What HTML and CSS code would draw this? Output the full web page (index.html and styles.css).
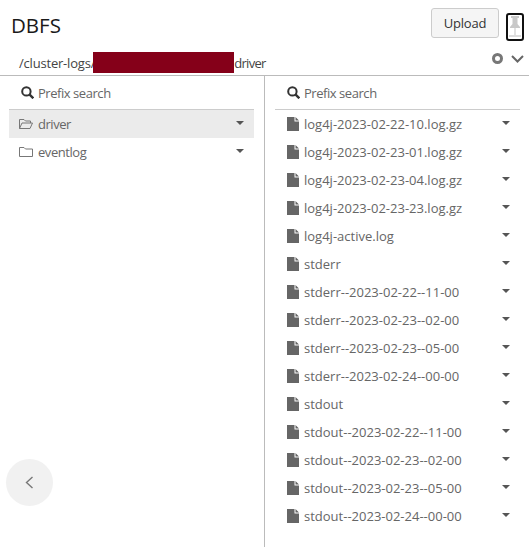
FILE: index.html
```html
<!DOCTYPE html>
<html lang="en">
<head>
    <meta charset="UTF-8">
    <title>DBFS</title>
    <link rel="stylesheet" href="styles.css">
</head>
<body>
    <svg class="sprites" width="0" height="0">
        <symbol id="i-file" viewBox="0 0 12 14"><path d="M0 0H7.500V4.500H12V14H0Z M8.500 0L12 3.500H8.500Z" fill="#666"/></symbol>
        <symbol id="i-caret" viewBox="0 0 8 4"><path d="M0 0H8L4 4Z" fill="#555"/></symbol>
        <symbol id="i-search" viewBox="0 0 13 13"><circle cx="5.400" cy="5.400" r="4.200" fill="none" stroke="#333" stroke-width="2"/><path d="M8.400 8.400L12.300 12.300" stroke="#333" stroke-width="2.400"/></symbol>
    </svg>

    <header class="top">
        <h1 class="title">DBFS</h1>
        <div class="actions">
            <button class="upload">Upload</button>
            <button class="pin">
                <svg width="12" height="24" viewBox="0 0 12 24"><path d="M2 1H10V3H8.500V9L11 12V13H1V12L3.500 9V3H2Z" fill="#c8c8c8"/><path d="M5.300 13H6.700V20H5.300Z" fill="#d4d4d4"/><path d="M0 20H12V22H0Z" fill="#dcdcdc"/></svg>
            </button>
        </div>
    </header>

    <div class="path">
        <div class="crumbs"><span class="crumb-root">/cluster-logs/</span><span class="redact"></span><span class="crumb-leaf">driver</span></div>
        <div class="path-tools">
            <span class="stop"></span>
            <svg width="13" height="8" viewBox="0 0 13 8"><path d="M1 1L6.500 6.500L12 1" fill="none" stroke="#666" stroke-width="2"/></svg>
        </div>
    </div>

    <main class="panes">
        <section class="pane pane-left">
            <div class="search"><svg width="13" height="13"><use href="#i-search"/></svg><span>Prefix search</span></div>
            <ul class="list">
                <li class="row active">
                    <svg class="ico" width="14" height="12" viewBox="0 0 14 12"><path d="M.5 10.500V1.500H5L6.500 3H11.500V5M.5 10.500L3 5H13.500L11 10.500Z" fill="none" stroke="#777"/></svg>
                    <span class="name">driver</span>
                    <svg class="caret" width="8" height="4"><use href="#i-caret"/></svg>
                </li>
                <li class="row">
                    <svg class="ico" width="14" height="12" viewBox="0 0 14 12"><path d="M.5 10.500V1.500H5L6.500 3H13.500V10.500Z" fill="none" stroke="#777"/></svg>
                    <span class="name">eventlog</span>
                    <svg class="caret" width="8" height="4"><use href="#i-caret"/></svg>
                </li>
            </ul>
            <button class="collapse">
                <svg width="9" height="13" viewBox="0 0 9 13"><path d="M7.500 1L1.500 6.500L7.500 12" fill="none" stroke="#777" stroke-width="1.400"/></svg>
            </button>
        </section>
        <section class="pane pane-right">
            <div class="search"><svg width="13" height="13"><use href="#i-search"/></svg><span>Prefix search</span></div>
            <ul class="list" id="files"></ul>
        </section>
    </main>

    <script>
        const names = [
            'log4j-2023-02-22-10.log.gz', 'log4j-2023-02-23-01.log.gz',
            'log4j-2023-02-23-04.log.gz', 'log4j-2023-02-23-23.log.gz',
            'log4j-active.log', 'stderr',
            'stderr--2023-02-22--11-00', 'stderr--2023-02-23--02-00',
            'stderr--2023-02-23--05-00', 'stderr--2023-02-24--00-00',
            'stdout', 'stdout--2023-02-22--11-00',
            'stdout--2023-02-23--02-00', 'stdout--2023-02-23--05-00',
            'stdout--2023-02-24--00-00'
        ];
        const files = document.getElementById('files');
        files.innerHTML = names.map(n => `
            <li class="row file">
                <svg class="ico" width="12" height="14"><use href="#i-file"/></svg>
                <span class="name">${n}</span>
                <svg class="caret" width="8" height="4"><use href="#i-caret"/></svg>
            </li>`).join('');
    </script>
</body>
</html>
```

FILE: styles.css
```css
* {
    margin: 0;
    padding: 0;
    box-sizing: border-box;
}

body {
    background: #fff;
    color: #333;
    font-family: 'Open Sans', sans-serif;
    font-size: 13px;
    height: 547px;
    overflow: hidden;
    display: flex;
    flex-direction: column;
}

.sprites {
    display: none;
}

.top {
    height: 50px;
    display: flex;
    justify-content: space-between;
    padding: 7px 5px 0 11px;
}

.title {
    font-size: 20.500px;
    font-weight: 400;
    line-height: 36px;
    color: #1a1a1a;
}

.actions {
    display: flex;
    gap: 7px;
    align-items: flex-start;
    padding-top: 1px;
}

.upload {
    width: 68px;
    height: 30px;
    background: #f5f5f5;
    border: 1px solid #ccc;
    border-radius: 3px;
    font: inherit;
    letter-spacing: -0.2px;
    color: #333;
}

.pin {
    width: 18px;
    height: 28px;
    margin-top: 5px;
    background: #fff;
    border: 2px solid #111;
    border-radius: 3px;
    display: flex;
    align-items: center;
    justify-content: center;
}

.path {
    height: 26px;
    display: flex;
    justify-content: space-between;
    align-items: center;
    padding: 0 5px 0 19px;
    border-bottom: 1px solid #bbb;
}

.crumbs {
    display: flex;
    align-items: center;
    color: #444;
    white-space: nowrap;
}

.crumb-root {
    letter-spacing: -0.200px;
}

.crumb-leaf {
    letter-spacing: -0.700px;
}

.redact {
    width: 141px;
    height: 21px;
    margin-left: -2px;
    background: #850019;
}

.path-tools {
    display: flex;
    align-items: center;
    gap: 8px;
    margin-top: -8px;
}

.stop {
    width: 11px;
    height: 11px;
    border: 3px solid #777;
    border-radius: 50%;
}

.panes {
    flex: 1;
    display: flex;
    min-height: 0;
}

.pane {
    position: relative;
}

.pane-left {
    width: 265px;
    padding: 0 10px 0 9px;
    border-right: 1px solid #bbb;
}

.pane-right {
    flex: 1;
    padding: 0 9px 0 10px;
}

.search {
    height: 34px;
    display: flex;
    align-items: center;
    gap: 4px;
    padding-left: 12px;
    border-bottom: 1px solid #ccc;
    color: #666;
    letter-spacing: -0.450px;
}

.list {
    list-style: none;
}

.row {
    height: 28px;
    display: flex;
    align-items: center;
    padding: 0 10px;
    color: #666;
}

.pane-left .name {
    letter-spacing: -0.450px;
}

.row.active {
    background: #ebebeb;
}

.row.file {
    padding-left: 12px;
}

.ico {
    flex: none;
    margin-right: 5px;
}

.name {
    flex: 1;
    white-space: nowrap;
}

.caret {
    flex: none;
    margin-top: -3px;
}

.collapse {
    position: absolute;
    left: 6px;
    top: 383px;
    width: 47px;
    height: 47px;
    border: 0;
    border-radius: 50%;
    background: #f1f1f1;
    display: flex;
    align-items: center;
    justify-content: center;
}
```
